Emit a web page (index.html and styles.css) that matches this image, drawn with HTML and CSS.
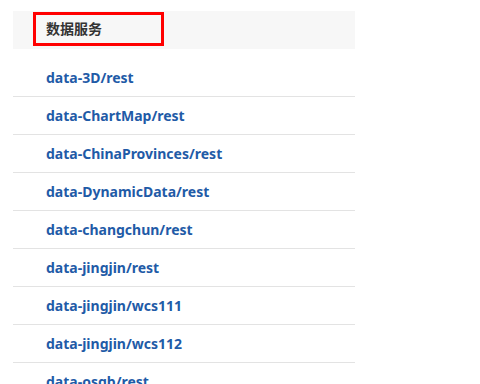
FILE: index.html
```html
<!DOCTYPE html>
<html lang="zh">
<head>
<meta charset="UTF-8">
<title>数据服务</title>
<link rel="stylesheet" href="styles.css">
</head>
<body>
<div class="panel">
<div class="panel-titulo"><span class="titulo-marca">数据服务</span></div>
<ul class="lista-servicios">
<li><a href="#">data-3D/rest</a></li>
<li><a href="#">data-ChartMap/rest</a></li>
<li><a href="#">data-ChinaProvinces/rest</a></li>
<li><a href="#">data-DynamicData/rest</a></li>
<li><a href="#">data-changchun/rest</a></li>
<li><a href="#">data-jingjin/rest</a></li>
<li><a href="#">data-jingjin/wcs111</a></li>
<li><a href="#">data-jingjin/wcs112</a></li>
<li><a href="#">data-osgb/rest</a></li>
</ul>
</div>
</body>
</html>
```
FILE: styles.css
```css
body {
    margin: 0;
    font-family: "Noto Sans", "Noto Sans CJK SC", sans-serif;
}

.panel {
    width: 342px;
    margin: 11px 0 0 13px;
}

.panel-titulo {
    height: 38px;
    background-color: #f7f7f7;
    padding: 1px 0 0 20px;
    box-sizing: border-box;
}

.titulo-marca {
    display: inline-block;
    width: 131px;
    height: 34px;
    box-sizing: border-box;
    border: 3px solid #f00;
    padding-left: 10px;
    line-height: 28px;
    font-size: 14px;
    font-weight: 600;
    color: #333;
}

.lista-servicios {
    list-style: none;
    margin: 10px 0 0;
    padding: 0;
}

.lista-servicios li {
    height: 38px;
    border-bottom: 1px solid #e3e3e3;
    padding-left: 33px;
    line-height: 37px;
    box-sizing: border-box;
}

.lista-servicios a {
    font-size: 14px;
    font-weight: bold;
    color: #1f5ba7;
    text-decoration: none;
}
```
